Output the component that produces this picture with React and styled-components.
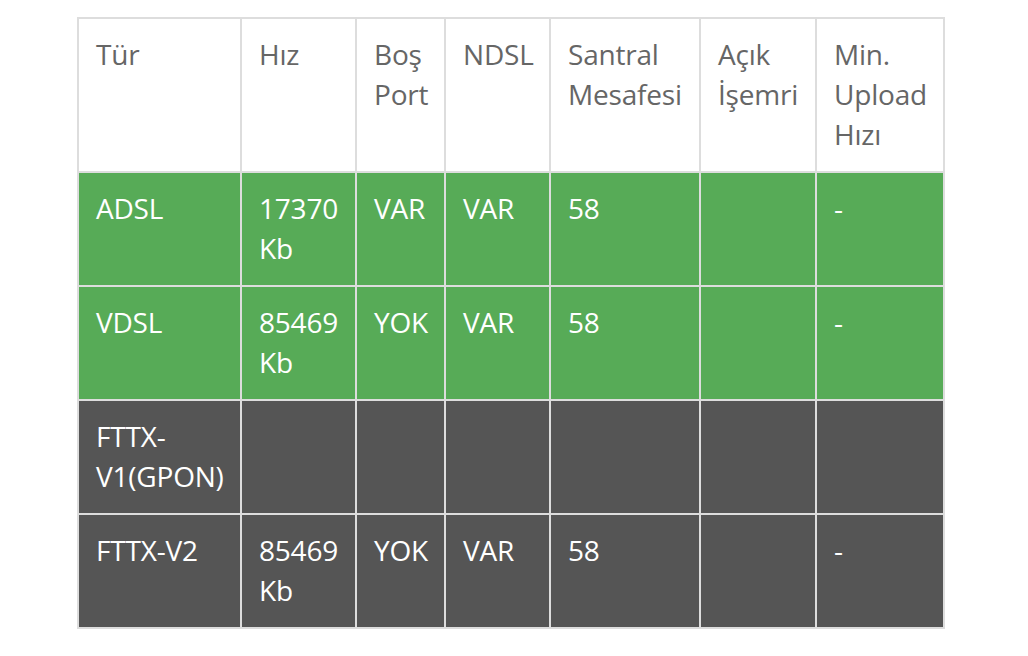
import styled, { createGlobalStyle } from "styled-components";

const GlobalStyle = createGlobalStyle`
  body {
    margin: 0;
    background: #ffffff;
    font-family: "Open Sans", "Liberation Sans", sans-serif;
  }
`;

const Page = styled.div`
  padding: 17px 0 0 77px;
`;

const Table = styled.table`
  border-collapse: collapse;
  table-layout: fixed;
  width: 868px;
  font-size: 28px;
  line-height: 40px;
  letter-spacing: -0.2px;
`;

const Th = styled.th`
  border: 2px solid #dddddd;
  padding: 15px 15px 17px 17px;
  text-align: left;
  vertical-align: top;
  font-weight: 400;
  color: #666666;
  background: #ffffff;
`;

const Row = styled.tr`
  background: ${({ tone }) => (tone === "green" ? "#57ab57" : "#555555")};
  color: #ffffff;
`;

const Td = styled.td`
  border: 2px solid #dddddd;
  padding: 15px 15px 17px 17px;
  vertical-align: top;
  word-wrap: break-word;
`;

const widths = [163, 115, 89, 105, 150, 116, 128];

const headers = ["Tür", "Hız", "Boş Port", "NDSL", "Santral Mesafesi", "Açık İşemri", "Min. Upload Hızı"];

const rows = [
  { tone: "green", cells: ["ADSL", "17370 Kb", "VAR", "VAR", "58", "", "-"] },
  { tone: "green", cells: ["VDSL", "85469 Kb", "YOK", "VAR", "58", "", "-"] },
  { tone: "dark", cells: ["FTTX-V1(GPON)", "", "", "", "", "", ""] },
  { tone: "dark", cells: ["FTTX-V2", "85469 Kb", "YOK", "VAR", "58", "", "-"] },
];

export default function App() {
  return (
    <>
      <GlobalStyle />
      <Page>
        <Table>
          <colgroup>
            {widths.map((w, i) => (
              <col key={i} style={{ width: w }} />
            ))}
          </colgroup>
          <thead>
            <tr>
              {headers.map((h) => (
                <Th key={h}>{h}</Th>
              ))}
            </tr>
          </thead>
          <tbody>
            {rows.map((r, i) => (
              <Row key={i} tone={r.tone}>
                {r.cells.map((c, j) => (
                  <Td key={j}>{c}</Td>
                ))}
              </Row>
            ))}
          </tbody>
        </Table>
      </Page>
    </>
  );
}
